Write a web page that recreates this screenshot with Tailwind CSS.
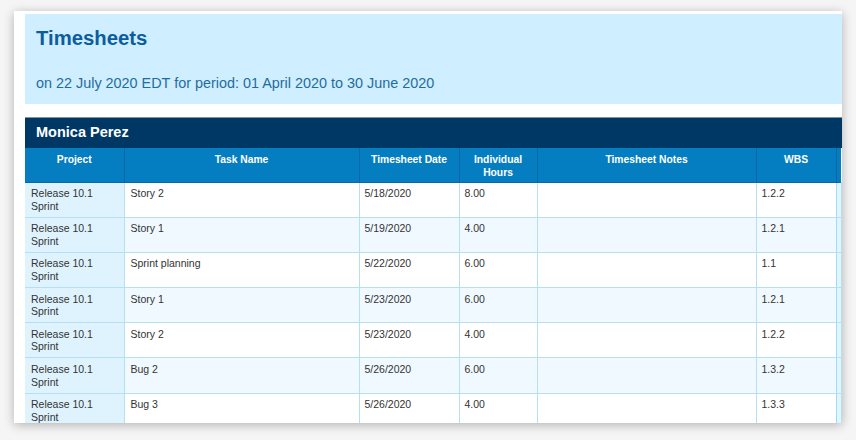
<!DOCTYPE html>
<html><head><meta charset="utf-8"><script src="https://cdn.jsdelivr.net/npm/@tailwindcss/browser@4"></script></head>
<body class="m-0 h-[440px] w-[856px] overflow-hidden bg-[#f5f5f5] font-['Liberation_Sans',Arial,sans-serif]">
<div class="ml-[14px] mt-[11px] h-[412px] w-[828px] overflow-hidden bg-white pl-[11px] pt-[3px] shadow-[0_2px_10px_rgba(0,0,0,0.28)]">
<header class="h-[90px] bg-[#cfeeff] pl-[11px] pt-[12px]">
<h1 class="text-[20.3px] leading-[25px] font-bold text-[#0b5d9e]">Timesheets</h1>
<p class="mt-[22px] text-[14.4px] leading-[20px] text-[#1f6d9c]">on 22 July 2020 EDT for period: 01 April 2020 to 30 June 2020</p>
</header>
<div class="mt-[13px] flex h-[31px] items-center border-t border-[#7f93a5] bg-[#003865] pl-[11px] text-[14.5px] font-bold text-white">Monica Perez</div>
<table class="w-[816px] table-fixed border-collapse text-[10.5px] leading-[12.7px] text-[#333]">
<colgroup><col class="w-[99px]"><col class="w-[235px]"><col class="w-[100px]"><col class="w-[78px]"><col class="w-[219px]"><col class="w-[80px]"><col class="w-[5px]"></colgroup>
<thead class="bg-[#057dc1] text-[10.3px] font-bold text-white"><tr class="h-[34px] border-b border-[#0a66a8] align-top">
<th class="border-r border-[#0a66a8] pt-[6px] font-bold">Project</th><th class="border-r border-[#0a66a8] pt-[6px] font-bold">Task Name</th><th class="border-r border-[#0a66a8] pt-[6px] font-bold">Timesheet Date</th><th class="border-r border-[#0a66a8] pt-[6px] font-bold">Individual<br>Hours</th><th class="border-r border-[#0a66a8] pt-[6px] font-bold">Timesheet Notes</th><th class="border-r border-[#0a66a8] pt-[6px] font-bold">WBS</th><th></th></tr></thead>
<tbody class="[&_td]:border-r [&_td]:border-b [&_td]:border-[#b5e0f0] [&_td]:pl-[5px] [&_td]:pt-[4.5px] [&_td]:align-top [&_td:nth-child(-n+2)]:pl-[6px]">
<tr class="h-[35.2px] bg-white"><td class="!bg-[#dff3fe]">Release 10.1<br>Sprint</td><td>Story 2</td><td>5/18/2020</td><td>8.00</td><td></td><td class="!border-r-[#9fdcf5]">1.2.2</td><td class="!bg-[#e2f4fd]"></td></tr>
<tr class="h-[35.2px] bg-[#f0f9ff]"><td class="!bg-[#dff3fe]">Release 10.1<br>Sprint</td><td>Story 1</td><td>5/19/2020</td><td>4.00</td><td></td><td class="!border-r-[#9fdcf5]">1.2.1</td><td class="!bg-[#e2f4fd]"></td></tr>
<tr class="h-[35.2px] bg-white"><td class="!bg-[#dff3fe]">Release 10.1<br>Sprint</td><td>Sprint planning</td><td>5/22/2020</td><td>6.00</td><td></td><td class="!border-r-[#9fdcf5]">1.1</td><td class="!bg-[#e2f4fd]"></td></tr>
<tr class="h-[35.2px] bg-[#f0f9ff]"><td class="!bg-[#dff3fe]">Release 10.1<br>Sprint</td><td>Story 1</td><td>5/23/2020</td><td>6.00</td><td></td><td class="!border-r-[#9fdcf5]">1.2.1</td><td class="!bg-[#e2f4fd]"></td></tr>
<tr class="h-[35.2px] bg-white"><td class="!bg-[#dff3fe]">Release 10.1<br>Sprint</td><td>Story 2</td><td>5/23/2020</td><td>4.00</td><td></td><td class="!border-r-[#9fdcf5]">1.2.2</td><td class="!bg-[#e2f4fd]"></td></tr>
<tr class="h-[35.2px] bg-[#f0f9ff]"><td class="!bg-[#dff3fe]">Release 10.1<br>Sprint</td><td>Bug 2</td><td>5/26/2020</td><td>6.00</td><td></td><td class="!border-r-[#9fdcf5]">1.3.2</td><td class="!bg-[#e2f4fd]"></td></tr>
<tr class="h-[35.2px] bg-white"><td class="!bg-[#dff3fe]">Release 10.1<br>Sprint</td><td>Bug 3</td><td>5/26/2020</td><td>4.00</td><td></td><td class="!border-r-[#9fdcf5]">1.3.3</td><td class="!bg-[#e2f4fd]"></td></tr>
</tbody></table>
</div>
</body></html>
